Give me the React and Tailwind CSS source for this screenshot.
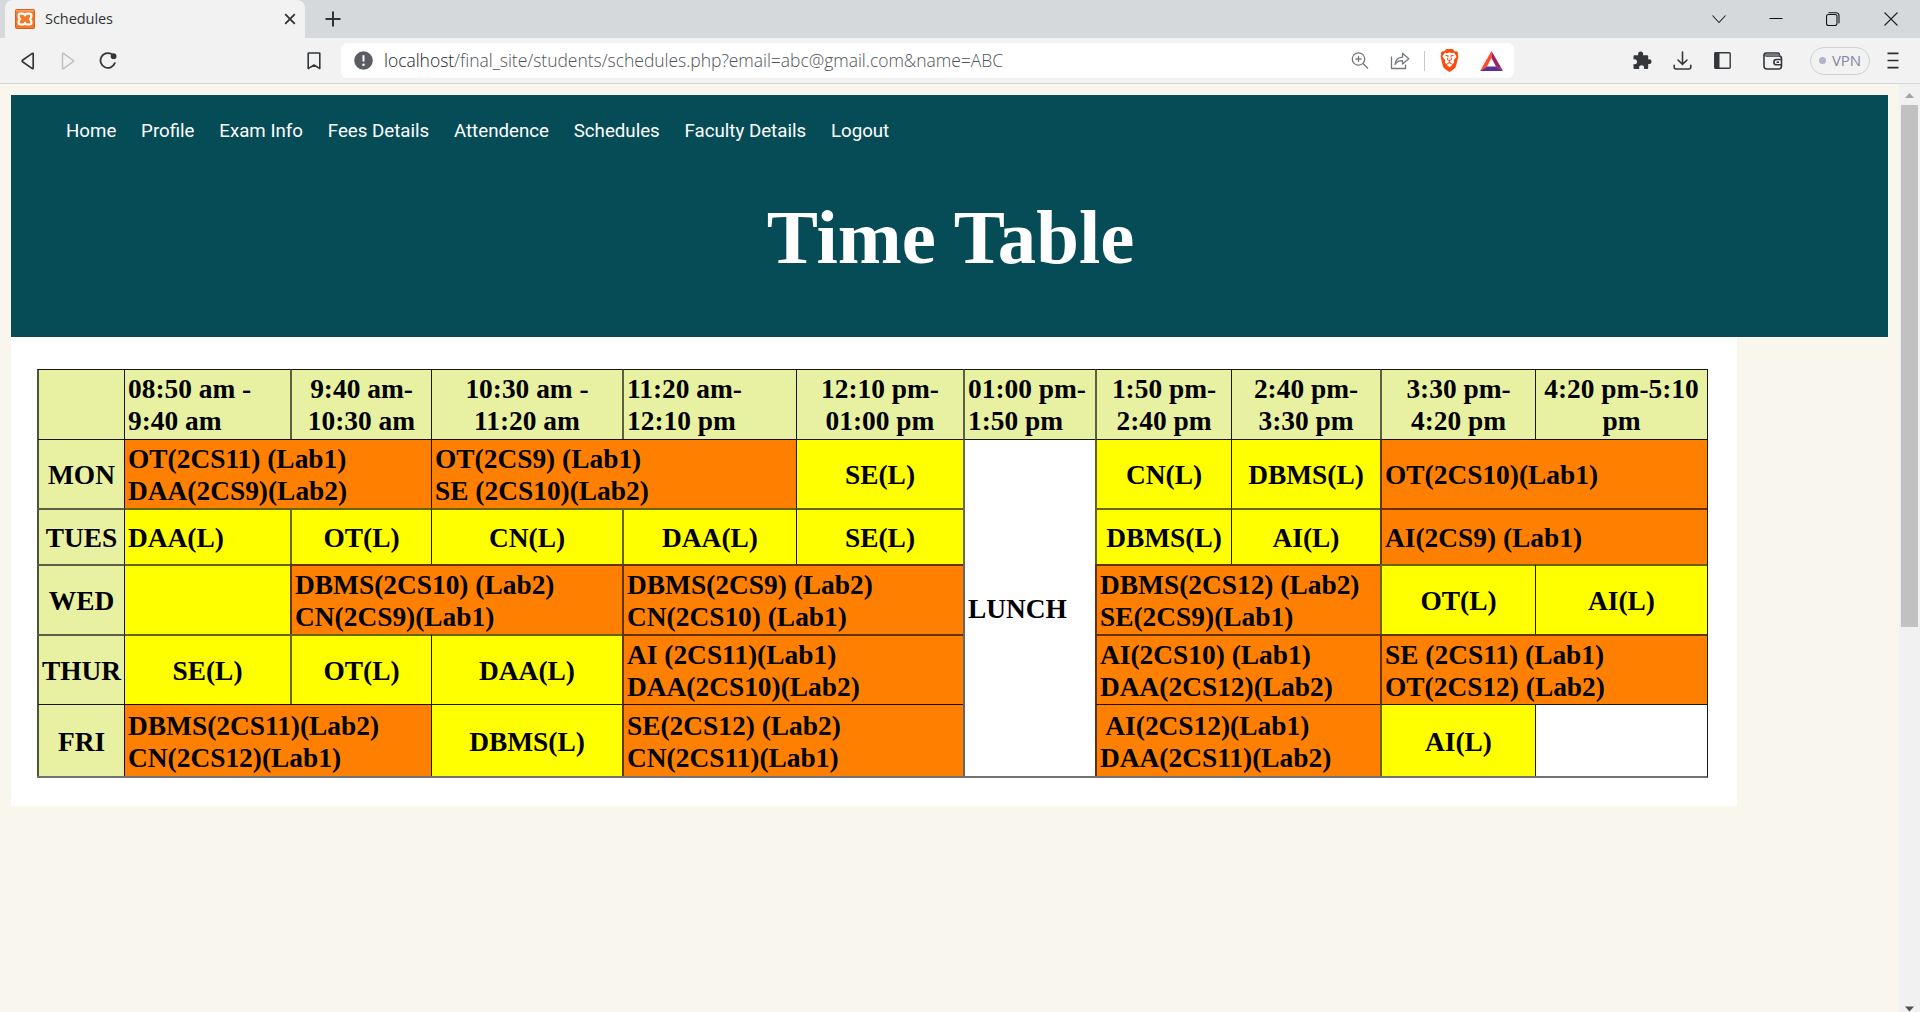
import React from "react";
import { SiBrave } from "react-icons/si";

const DAY = "bg-[#e8f1a1]";
const LEC = "bg-[#ffff00]";
const LAB = "bg-[#ff8000]";
const NONE = "bg-white";

// [row, column, rowSpan, columnSpan, colour, alignment, lines]
const CELLS = [
  [0, 0, 1, 1, DAY, "c", []],
  [0, 1, 1, 1, DAY, "l", ["08:50 am -", "9:40 am"]],
  [0, 2, 1, 1, DAY, "c", ["9:40 am-", "10:30 am"]],
  [0, 3, 1, 1, DAY, "c", ["10:30 am -", "11:20 am"]],
  [0, 4, 1, 1, DAY, "l", ["11:20 am-", "12:10 pm"]],
  [0, 5, 1, 1, DAY, "c", ["12:10 pm-", "01:00 pm"]],
  [0, 6, 1, 1, DAY, "l", ["01:00 pm-", "1:50 pm"]],
  [0, 7, 1, 1, DAY, "c", ["1:50 pm-", "2:40 pm"]],
  [0, 8, 1, 1, DAY, "c", ["2:40 pm-", "3:30 pm"]],
  [0, 9, 1, 1, DAY, "c", ["3:30 pm-", "4:20 pm"]],
  [0, 10, 1, 1, DAY, "c", ["4:20 pm-5:10", "pm"]],

  [1, 0, 1, 1, DAY, "c", ["MON"]],
  [1, 1, 1, 2, LAB, "l", ["OT(2CS11) (Lab1)", "DAA(2CS9)(Lab2)"]],
  [1, 3, 1, 2, LAB, "l", ["OT(2CS9) (Lab1)", "SE (2CS10)(Lab2)"]],
  [1, 5, 1, 1, LEC, "c", ["SE(L)"]],
  [1, 6, 5, 1, NONE, "l", ["LUNCH"]],
  [1, 7, 1, 1, LEC, "c", ["CN(L)"]],
  [1, 8, 1, 1, LEC, "c", ["DBMS(L)"]],
  [1, 9, 1, 2, LAB, "l", ["OT(2CS10)(Lab1)"]],

  [2, 0, 1, 1, DAY, "c", ["TUES"]],
  [2, 1, 1, 1, LEC, "l", ["DAA(L)"]],
  [2, 2, 1, 1, LEC, "c", ["OT(L)"]],
  [2, 3, 1, 1, LEC, "c", ["CN(L)"]],
  [2, 4, 1, 1, LEC, "c", ["DAA(L)"]],
  [2, 5, 1, 1, LEC, "c", ["SE(L)"]],
  [2, 7, 1, 1, LEC, "c", ["DBMS(L)"]],
  [2, 8, 1, 1, LEC, "c", ["AI(L)"]],
  [2, 9, 1, 2, LAB, "l", ["AI(2CS9) (Lab1)"]],

  [3, 0, 1, 1, DAY, "c", ["WED"]],
  [3, 1, 1, 1, LEC, "c", []],
  [3, 2, 1, 2, LAB, "l", ["DBMS(2CS10) (Lab2)", "CN(2CS9)(Lab1)"]],
  [3, 4, 1, 2, LAB, "l", ["DBMS(2CS9) (Lab2)", "CN(2CS10) (Lab1)"]],
  [3, 7, 1, 2, LAB, "l", ["DBMS(2CS12) (Lab2)", "SE(2CS9)(Lab1)"]],
  [3, 9, 1, 1, LEC, "c", ["OT(L)"]],
  [3, 10, 1, 1, LEC, "c", ["AI(L)"]],

  [4, 0, 1, 1, DAY, "c", ["THUR"]],
  [4, 1, 1, 1, LEC, "c", ["SE(L)"]],
  [4, 2, 1, 1, LEC, "c", ["OT(L)"]],
  [4, 3, 1, 1, LEC, "c", ["DAA(L)"]],
  [4, 4, 1, 2, LAB, "l", ["AI (2CS11)(Lab1)", "DAA(2CS10)(Lab2)"]],
  [4, 7, 1, 2, LAB, "l", ["AI(2CS10) (Lab1)", "DAA(2CS12)(Lab2)"]],
  [4, 9, 1, 2, LAB, "l", ["SE (2CS11) (Lab1)", "OT(2CS12) (Lab2)"]],

  [5, 0, 1, 1, DAY, "c", ["FRI"]],
  [5, 1, 1, 2, LAB, "l", ["DBMS(2CS11)(Lab2)", "CN(2CS12)(Lab1)"]],
  [5, 3, 1, 1, LEC, "c", ["DBMS(L)"]],
  [5, 4, 1, 2, LAB, "l", ["SE(2CS12) (Lab2)", "CN(2CS11)(Lab1)"]],
  [5, 7, 1, 2, LAB, "l", [" AI(2CS12)(Lab1)", "DAA(2CS11)(Lab2)"]],
  [5, 9, 1, 1, LEC, "c", ["AI(L)"]],
  [5, 10, 1, 1, NONE, "c", []],
];

const LEFT = [
  "border-l-2 border-l-black/65",
  "border-l border-l-black/90",
  "border-l-2 border-l-black/60",
  "border-l border-l-black/90",
  "border-l-2 border-l-black/60",
  "border-l border-l-black/90",
  "border-l-2 border-l-black/60",
  "border-l-2 border-l-black/60",
  "border-l border-l-black/90",
  "border-l-2 border-l-black/60",
  "border-l border-l-black/90",
];
const TOP = [
  "border-t border-t-black/90",
  "border-t border-t-black/90",
  "border-t-2 border-t-black/60",
  "border-t-2 border-t-black/60",
  "border-t-2 border-t-black/60",
  "border-t border-t-black/90",
];

function Cell({ cell }) {
  const [r, c, rs, cs, colour, align, lines] = cell;
  const alignCls = align === "l" ? "items-start text-left pl-[3px]" : "items-center text-center";
  return (
    <div
      className={`flex flex-col justify-center whitespace-pre ${colour} ${alignCls} ${LEFT[c]} ${TOP[r]} ${r === 0 ? "pt-[3px]" : "pt-1"}`}
      style={{ gridRow: `${r + 1} / span ${rs}`, gridColumn: `${c + 1} / span ${cs}` }}
    >
      {lines.map((t) => (
        <div key={t}>{t}</div>
      ))}
    </div>
  );
}

function Favicon() {
  return (
    <svg width="20" height="20" viewBox="0 0 20 20">
      <rect width="20" height="20" rx="2" fill="#d4611c" />
      <rect x="1" y="1" width="18" height="18" rx="1" fill="#f47a2a" />
      <path d="M1 1.800h18" stroke="#f9a468" strokeWidth="1.400" />
      <path
        d="M5.600 4.600h2q1.500 0 2.400 1.700q.9-1.700 2.400-1.700h2q2 0 2 2.200q0 2.200-1.500 3.300q1.500 1.100 1.500 3.200q0 2.200-2 2.200h-1.400q-2.200 0-3-1.600q-.8 1.600-3 1.600h-1.400q-2 0-2-2.200q0-2.100 1.500-3.200q-1.500-1.100-1.500-3.300q0-2.200 2-2.200z"
        fill="none"
        stroke="#fff"
        strokeWidth="2.200"
        strokeLinejoin="round"
      />
    </svg>
  );
}

function TabStrip() {
  return (
    <div className="flex h-[38px] items-center bg-[#d5d9dc] pl-[5px] text-[#2f3337]">
      <div className="flex h-[38px] w-[300px] items-center rounded-t-lg bg-[#f2f2f2] pl-[10px]">
        <Favicon />
        <span className="ml-[10px] font-['Open_Sans'] text-[14.500px] tracking-[-0.050px]">Schedules</span>
        <svg className="ml-auto mr-[9px]" width="12" height="12" viewBox="0 0 12 12" stroke="#33373b" strokeWidth="1.900">
          <path d="M1.200 1.200l9.600 9.600M10.800 1.200l-9.600 9.600" />
        </svg>
      </div>
      <svg className="ml-[20px]" width="16" height="16" viewBox="0 0 16 16" stroke="#2f3337" strokeWidth="2">
        <path d="M8 .5v15M.5 8h15" />
      </svg>
      <div className="ml-auto flex items-center">
        <svg className="mr-[43px]" width="14" height="14" viewBox="0 0 14 14" fill="none" stroke="#222" strokeWidth="1.100">
          <path d="M.5 3.500l6.500 7l6.500-7" />
        </svg>
        <svg className="mr-[43px]" width="14" height="14" viewBox="0 0 14 14" stroke="#111" strokeWidth="1">
          <path d="M.5 6.500h13" />
        </svg>
        <svg className="mr-[44px]" width="14" height="14" viewBox="0 0 14 14" fill="none" stroke="#111" strokeWidth="1.100">
          <rect x=".5" y="2.500" width="10.500" height="11" rx="2" />
          <path d="M2.500 .7h7.500q3 0 3 3v7.500" />
        </svg>
        <svg className="mr-[22px]" width="14" height="14" viewBox="0 0 14 14" stroke="#222" strokeWidth="1.100">
          <path d="M.5.5l13 13M13.500.5l-13 13" />
        </svg>
      </div>
    </div>
  );
}

function Slot({ children, className = "w-10" }) {
  return <div className={`flex shrink-0 items-center justify-center ${className}`}>{children}</div>;
}

function Toolbar() {
  return (
    <div className="flex h-[46px] items-center border-b border-[#d3d7db] bg-[#f2f2f2] pl-2">
      <Slot>
        <svg width="16" height="18" viewBox="0 0 16 18" fill="none" stroke="#33373b" strokeWidth="1.700" strokeLinejoin="round">
          <path d="M13.200 1.900v14.200q0 1-.9.5L2.500 9.700q-.8-.7 0-1.400l9.800-6.900q.9-.5.9.5z" />
        </svg>
      </Slot>
      <Slot>
        <svg width="16" height="18" viewBox="0 0 16 18" fill="none" stroke="#bfc1c3" strokeWidth="1.500" strokeLinejoin="round">
          <path d="M2.500 1.900v14.200q0 1 .9.500l9.800-6.900q.8-.7 0-1.400l-9.800-6.900q-.9-.5-.9.500z" />
        </svg>
      </Slot>
      <Slot>
        <svg width="18" height="18" viewBox="0 0 18 18" fill="none" stroke="#33373b" strokeWidth="1.800">
          <path d="M12.500 2A7.400 7.400 0 1 0 15.800 11.200" strokeLinecap="round" />
          <circle cx="14.600" cy="4.200" r="2.900" fill="#33373b" stroke="none" />
        </svg>
      </Slot>
      <Slot className="ml-[165px] w-[41px]">
        <svg width="14" height="18" viewBox="0 0 14 18" fill="none" stroke="#33373b" strokeWidth="1.600" strokeLinejoin="round">
          <path d="M1.800 1h10.400q.6 0 .6.600v15l-5.800-3.600l-5.800 3.600v-15q0-.6.600-.6z" />
        </svg>
      </Slot>
      <div className="ml-[7px] flex h-[35px] w-[1173px] shrink-0 items-center rounded-md bg-white pl-[13px]">
        <svg width="19" height="19" viewBox="0 0 19 19">
          <circle cx="9.500" cy="9.500" r="9.300" fill="#5a5e62" />
          <path d="M9.500 4.200v6.300" stroke="#fff" strokeWidth="2" />
          <circle cx="9.500" cy="13.800" r="1.300" fill="#fff" />
        </svg>
        <span className="mb-px ml-[11px] whitespace-nowrap font-['Open_Sans'] text-[17.500px] font-light tracking-[-0.030px] text-[#4f5357]">
          <span className="text-[#1d2023]">localhost</span>
          /final_site/students/schedules.php?email=abc@gmail.com&amp;name=ABC
        </span>
        <div className="ml-auto flex items-center">
          <svg className="mr-[21px]" width="18" height="18" viewBox="0 0 18 18" fill="none" stroke="#75797d" strokeWidth="1.300">
            <circle cx="7.500" cy="7" r="6.200" />
            <path d="M12 11.500l5 5M7.500 4v6M4.500 7h6" />
          </svg>
          <svg className="mr-[14px]" width="20" height="18" viewBox="0 0 20 18" fill="none" stroke="#75797d" strokeWidth="1.300" strokeLinejoin="round">
            <path d="M1.500 4.500v12h14v-4" />
            <path d="M5 12.500q.7-6.800 7.500-7.300V1.200l6.300 5.600l-6.300 5.200V8.600q-5-.2-7.500 3.900z" />
          </svg>
          <div className="mr-[14px] h-5 w-px bg-[#c8c9cb]" />
          <SiBrave className="mr-[20px] h-[23px] w-[21px]" color="#fb4f12" preserveAspectRatio="none" />
          <svg className="mr-[11px]" width="23" height="20" viewBox="0 0 23 20">
            <path d="M11.500 0L0 20L7 15.500L11.500 7z" fill="#ff4b28" />
            <path d="M11.500 0L23 20L16 15.500L11.500 7z" fill="#9e1f63" />
            <path d="M0 20h23l-7-4.500H7z" fill="#5e2f8f" />
          </svg>
        </div>
      </div>
      <Slot className="ml-[108px] w-10">
        <svg width="19" height="19" viewBox="0 0 19 19" fill="#33373b">
          <path d="M1.500 4.200h3.800q-.2-.6-.2-1.300a2.500 2.500 0 0 1 5 0q0 .7-.2 1.300h4.300q1 0 1 1v3.300q.5-.2 1-.2a2.400 2.400 0 0 1 0 4.800q-.5 0-1-.2v4q0 1-1 1h-3.300q.2-.6.200-1.100a2.500 2.500 0 0 0-5 0q0 .5.200 1.100H1.500q-1 0-1-1v-3.800q.5.200 1 .2a2.500 2.500 0 0 0 0-5q-.5 0-1 .2V5.200q0-1 1-1z" />
        </svg>
      </Slot>
      <Slot>
        <svg width="19" height="19" viewBox="0 0 19 19" fill="none" stroke="#33373b" strokeWidth="1.600" strokeLinecap="round">
          <path d="M9.500 1v12M5 9l4.500 4.300L14 9" />
          <path d="M1.200 14.200v1.800q0 2 2 2h12.600q2 0 2-2v-1.800" />
        </svg>
      </Slot>
      <Slot>
        <svg width="17" height="17" viewBox="0 0 17 17">
          <rect x=".8" y=".8" width="15.400" height="15.400" rx="1" fill="none" stroke="#33373b" strokeWidth="1.400" />
          <path d="M.5.5h5v16h-5z" fill="#33373b" />
        </svg>
      </Slot>
      <Slot className="ml-[11px] w-10">
        <svg width="20" height="18" viewBox="0 0 20 18" fill="none" stroke="#33373b" strokeWidth="1.600">
          <path d="M1 3.500q0-2.500 2.500-2.500h11q2 0 2 2.500" />
          <path d="M1 3v11q0 3 3 3h11.500q3 0 3-3V6.500q0-2.500-2.500-2.500H2.500" />
          <path d="M2 3h13.500" stroke="#777b7f" strokeWidth="2" />
          <path d="M18.500 7.500h-5a2.600 2.600 0 0 0 0 5.300h5M13.500 10.200h2.500" />
        </svg>
      </Slot>
      <div className="ml-[17px] flex h-[28px] w-[60px] shrink-0 items-center rounded-full border border-[#cfd1d3] pl-2">
        <span className="h-[7px] w-[7px] rounded-full bg-[#b0b3c9]" />
        <span className="mb-px ml-[6px] font-['Open_Sans'] text-[15px] tracking-[-0.100px] text-[#8287a0]">VPN</span>
      </div>
      <Slot className="ml-[3px] w-10">
        <svg width="12" height="17" viewBox="0 0 12 17" stroke="#2b2f33" strokeWidth="1.700">
          <path d="M.5 1.300h11M.5 8.500h11M.5 15.700h11" />
        </svg>
      </Slot>
    </div>
  );
}

const NAV = ["Home", "Profile", "Exam Info", "Fees Details", "Attendence", "Schedules", "Faculty Details", "Logout"];

export default function App() {
  return (
    <div className="flex h-[1012px] w-[1920px] flex-col overflow-hidden bg-[#f9f6ed]">
      <TabStrip />
      <Toolbar />
      <div className="flex flex-1 overflow-hidden">
        <main className="w-[1899px] shrink-0 pl-[11px] pt-[11px]">
          <header className="h-[242px] w-[1877px] bg-[#064c56] text-white">
            <nav className="flex gap-[24.800px] pl-[55px] pt-[25px] font-[Roboto] text-[18.700px] leading-[22px]">
              {NAV.map((n) => (
                <a key={n} className="whitespace-nowrap">
                  {n}
                </a>
              ))}
            </nav>
            <h1 className="mt-[52px] pl-[2px] text-center font-['Liberation_Serif'] text-[76.800px] font-bold leading-[88px]">Time Table</h1>
          </header>
          <section className="h-[469px] w-[1726px] bg-white pl-[26px] pt-8">
            <div className="grid w-[1671px] grid-cols-[87px_166px_141px_191px_174px_167px_132px_136px_149px_155px_172px] grid-rows-[70px_69px_56px_70px_70px_72px] border-r border-b-2 border-r-black/90 border-b-black/55 font-['Liberation_Serif'] text-[27.400px] font-bold leading-[31.700px] text-black">
              {CELLS.map((c) => (
                <Cell key={`${c[0]}-${c[1]}`} cell={c} />
              ))}
            </div>
          </section>
        </main>
        <div className="flex w-[21px] shrink-0 flex-col items-center bg-[#f1f1f1]">
          <svg className="mt-[8px]" width="9" height="6" viewBox="0 0 9 6">
            <path d="M0 6L4.500 1L9 6z" fill="#a3a3a3" />
          </svg>
          <div className="mt-[7px] h-[522px] w-[17px] bg-[#c1c1c1]" />
          <svg className="mt-auto" width="9" height="6" viewBox="0 0 9 6">
            <path d="M0 0.500h9L4.500 5.500z" fill="#505050" />
          </svg>
        </div>
      </div>
    </div>
  );
}
